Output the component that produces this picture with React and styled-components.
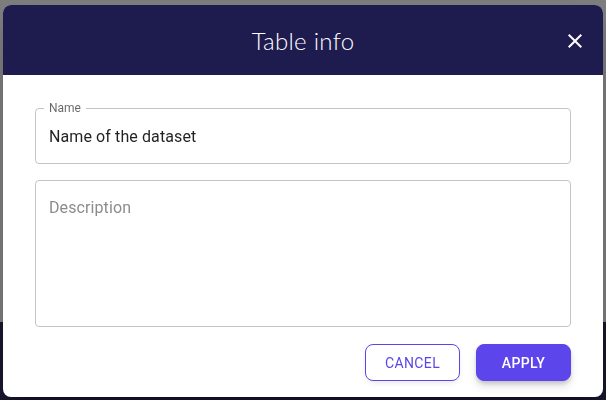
import styled, { createGlobalStyle } from "styled-components";

const GlobalStyle = createGlobalStyle`
  html, body {
    margin: 0;
    padding: 0;
  }
  body {
    font-family: Roboto, "Liberation Sans", Arial, sans-serif;
    overflow: hidden;
  }
  * {
    box-sizing: border-box;
  }
`;

const Page = styled.div`
  width: 100vw;
  height: 100vh;
  display: flex;
  flex-direction: column;
  background: #7e7e7e;
`;

const PageTop = styled.div`
  flex: 0 0 322px;
`;

const PageFooter = styled.div`
  flex: 1;
  background: #17162e;
`;

const Overlay = styled.div`
  position: fixed;
  inset: 0;
  display: flex;
  justify-content: center;
  align-items: flex-start;
  padding: 5px 3px 0;
`;

const Dialog = styled.div`
  width: 600px;
  background: #fff;
  border-radius: 8px;
  overflow: hidden;
  display: flex;
  flex-direction: column;
  box-shadow: 0 11px 15px -7px rgba(0, 0, 0, 0.2),
    0 24px 38px 3px rgba(0, 0, 0, 0.14);
`;

const Header = styled.header`
  height: 70px;
  background: #1e1b4f;
  display: grid;
  grid-template-columns: 1fr auto 1fr;
  align-items: center;
  padding: 0 16px;
`;

const Title = styled.h2`
  grid-column: 2;
  margin: 0;
  font-family: Lato, "Open Sans", sans-serif;
  font-weight: 300;
  font-size: 24px;
  color: #fff;
  letter-spacing: 0.3px;
`;

const CloseButton = styled.button`
  grid-column: 3;
  justify-self: end;
  width: 24px;
  height: 24px;
  padding: 0;
  border: none;
  background: none;
  color: #fff;
  cursor: pointer;
  display: flex;
  margin-top: 1px;
`;

const Body = styled.div`
  padding: 33px 32px 16px;
  display: flex;
  flex-direction: column;
`;

const Field = styled.div`
  position: relative;
  height: ${(p) => p.$height}px;
  border: 1px solid #c4c4c4;
  border-radius: 4px;
  padding: ${(p) => p.$padTop}px 13px 0;
  margin-bottom: ${(p) => p.$gap}px;
`;

const FieldLabel = styled.span`
  position: absolute;
  top: -8px;
  left: 8px;
  padding: 0 5px;
  background: #fff;
  font-size: 12px;
  line-height: 14px;
  color: rgba(0, 0, 0, 0.6);
`;

const Value = styled.div`
  font-size: 16px;
  line-height: 23px;
  letter-spacing: 0.1px;
  color: ${(p) => (p.$placeholder ? "#8c8c8c" : "rgba(0, 0, 0, 0.87)")};
`;

const Actions = styled.div`
  display: flex;
  justify-content: flex-end;
  gap: 16px;
`;

const Button = styled.button`
  width: 95px;
  height: 37px;
  border-radius: 8px;
  font-family: Roboto, "Liberation Sans", sans-serif;
  font-size: 14px;
  letter-spacing: 0.4px;
  text-transform: uppercase;
  cursor: pointer;
  border: 1px solid #5b45e8;
  background: ${(p) => (p.$primary ? "#5b45eb" : "#fff")};
  color: ${(p) => (p.$primary ? "#fff" : "#5b45e8")};
  font-weight: ${(p) => (p.$primary ? 500 : 400)};
  box-shadow: ${(p) =>
    p.$primary
      ? "0 3px 5px -1px rgba(0,0,0,0.2), 0 6px 10px 0 rgba(0,0,0,0.1)"
      : "0 3px 6px -2px rgba(0,0,0,0.12)"};
`;

function CloseIcon() {
  return (
    <svg width="24" height="24" viewBox="0 0 24 24" fill="currentColor">
      <path d="M19 6.41 17.59 5 12 10.59 6.41 5 5 6.41 10.59 12 5 17.59 6.41 19 12 13.41 17.59 19 19 17.59 13.41 12z" />
    </svg>
  );
}

export default function App() {
  return (
    <>
      <GlobalStyle />
      <Page>
        <PageTop />
        <PageFooter />
      </Page>
      <Overlay>
        <Dialog>
          <Header>
            <Title>Table info</Title>
            <CloseButton aria-label="close">
              <CloseIcon />
            </CloseButton>
          </Header>
          <Body>
            <Field $height={56} $gap={16} $padTop={16}>
              <FieldLabel>Name</FieldLabel>
              <Value>Name of the dataset</Value>
            </Field>
            <Field $height={147} $gap={17} $padTop={15}>
              <Value $placeholder>Description</Value>
            </Field>
            <Actions>
              <Button>Cancel</Button>
              <Button $primary>Apply</Button>
            </Actions>
          </Body>
        </Dialog>
      </Overlay>
    </>
  );
}
